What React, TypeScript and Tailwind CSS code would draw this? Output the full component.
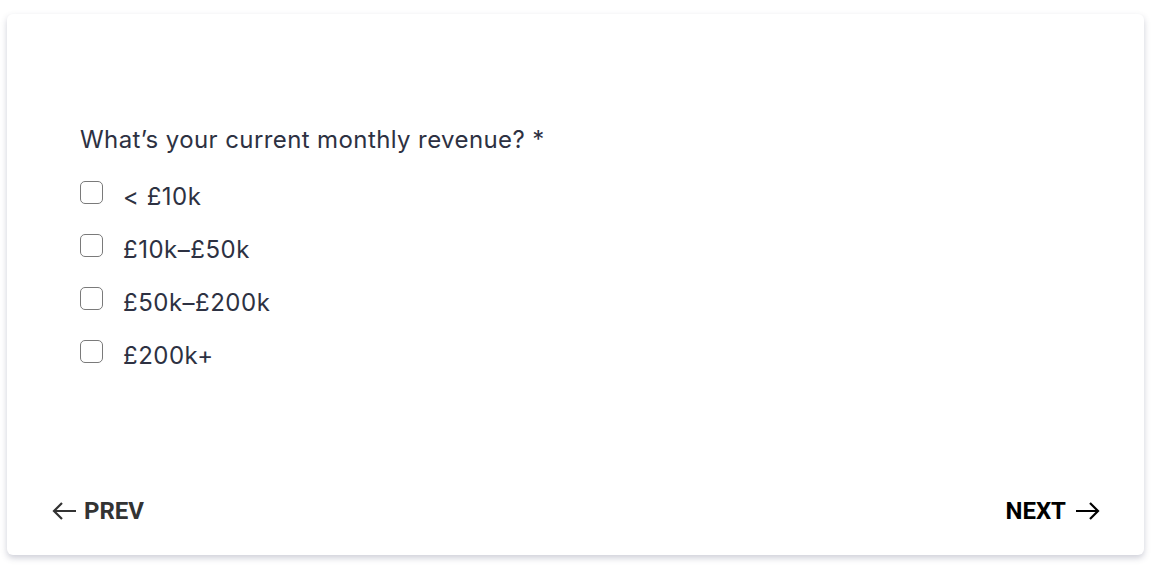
import React, { useState } from "react";

const options = ["< £10k", "£10k–£50k", "£50k–£200k", "£200k+"];

const App = () => {
  const [picked, setPicked] = useState<string[]>([]);

  const toggle = (opt: string) => {
    setPicked((prev) =>
      prev.includes(opt) ? prev.filter((p) => p !== opt) : [...prev, opt]
    );
  };

  return (
    <div className="w-full h-[566px] bg-white pl-[7px] pr-[11px] pt-[14px] overflow-hidden">
      <div className="h-[541px] bg-white rounded-md shadow-[0_3px_6px_rgba(60,64,100,0.25)] flex flex-col">
        <div className="flex-1 px-[73px] pt-[111px]" style={{ fontFamily: "Inter, sans-serif" }}>
          <p className="text-[24px] tracking-[0.4px] text-[#2d3142] leading-[30px]">
            What’s your current monthly revenue? *
          </p>
          <div className="mt-[26px] flex flex-col gap-[22px]">
            {options.map((opt) => (
              <label
                key={opt}
                onClick={() => toggle(opt)}
                className="flex items-start gap-[20px] cursor-pointer"
              >
                <span
                  className={`w-[23px] h-[23px] rounded-[5px] border-[1.5px] border-[#7a7a7a] ${
                    picked.includes(opt) ? "bg-[#2d3142]" : "bg-white"
                  }`}
                />
                <span className="mt-[1px] text-[24px] tracking-[0.5px] leading-[30px] text-[#2d3142]">{opt}</span>
              </label>
            ))}
          </div>
        </div>
        <div
          className="h-[84px] flex items-center justify-between pl-[45px] pr-[44px] pb-[4px]"
          style={{ fontFamily: "Roboto, sans-serif" }}
        >
          <button className="flex items-center gap-[7px] text-[24px] font-bold text-[#333333]">
            <svg width="25" height="20" viewBox="0 0 25 20" fill="none" stroke="currentColor" strokeWidth="2.2">
              <path d="M24 10H2M10 2L2 10L10 18" />
            </svg>
            PREV
          </button>
          <button className="flex items-center gap-[9px] text-[24px] font-bold text-black">
            NEXT
            <svg width="25" height="20" viewBox="0 0 25 20" fill="none" stroke="currentColor" strokeWidth="2.2">
              <path d="M1 10H23M15 2L23 10L15 18" />
            </svg>
          </button>
        </div>
      </div>
    </div>
  );
};

export default App;
